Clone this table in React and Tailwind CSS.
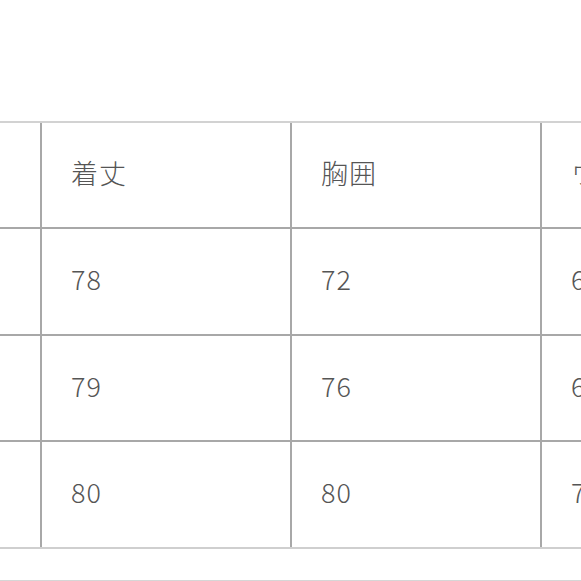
const headers = ["", "着丈", "胸囲", "ウエスト"];
const rows = [
  ["S", "78", "72", "64"],
  ["M", "79", "76", "68"],
  ["L", "80", "80", "72"],
];

export default function App() {
  return (
    <div
      className="w-[581px] h-[581px] overflow-hidden bg-white"
      style={{ fontFamily: '"Noto Sans CJK JP", "Noto Sans", sans-serif' }}
    >
      <div className="pt-[121px]">
        <div className="ml-[-208px] w-[1100px] border-t-2 border-[#d2d2d2]">
          {[headers, ...rows].map((row, i) => (
            <div
              key={i}
              className={`flex h-[106.4px] border-b-2 ${
                i === rows.length ? "border-[#cfcfcf]" : "border-[#a8a8a8]"
              }`}
            >
              {row.map((cell, j) => (
                <div
                  key={j}
                  className="w-[250px] shrink-0 flex items-center pl-[29px] pb-[4px] border-r-2 border-[#a8a8a8] text-[27px] text-[#555] font-light tracking-[1px]"
                >
                  {j === 0 ? "" : cell}
                </div>
              ))}
            </div>
          ))}
        </div>
        <div className="mt-[31px] border-t-2 border-[#d6d6d6]" />
      </div>
    </div>
  );
}
